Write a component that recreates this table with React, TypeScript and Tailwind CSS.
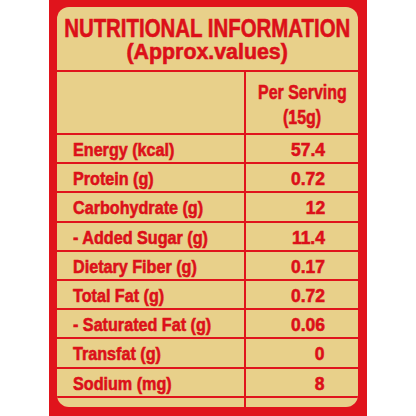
import React from 'react';

const rows: [string, string][] = [
  ['Energy (kcal)', '57.4'],
  ['Protein (g)', '0.72'],
  ['Carbohydrate (g)', '12'],
  ['- Added Sugar (g)', '11.4'],
  ['Dietary Fiber (g)', '0.17'],
  ['Total Fat (g)', '0.72'],
  ['- Saturated Fat (g)', '0.06'],
  ['Transfat (g)', '0'],
  ['Sodium (mg)', '8'],
];

export default function App() {
  return (
    <div className="w-[416px] h-[416px] bg-white overflow-hidden">
      <div
        className="ml-[49px] w-[318px] h-[416px] bg-[#e0141c] pt-[7px] pl-[8px] pr-[9px] text-[#dc1019] [-webkit-text-stroke:0.6px_#dc1019]"
        style={{ fontFamily: '"Liberation Sans", Arial, sans-serif' }}
      >
        <div className="h-[400px] rounded-[12px] bg-[#e8d08a] overflow-hidden">
          <div className="h-[65px] border-b-2 border-[#e0141c] flex flex-col items-center font-bold whitespace-nowrap">
            <div className="mt-[9px] text-[26px] leading-[24px] scale-x-[0.785] origin-center">NUTRITIONAL INFORMATION</div>
            <div className="mt-[1px] text-[22px] leading-[22px] scale-x-[0.97] origin-center">(Approx.values)</div>
          </div>
          <div className="flex h-[63px] border-b-2 border-[#e0141c]">
            <div className="w-[189px] shrink-0 border-r-2 border-[#e0141c]" />
            <div className="flex-1 min-w-0 flex flex-col items-center pt-[6.5px] text-[21px] font-bold leading-[25px] whitespace-nowrap">
              <div className="scale-x-[0.76] origin-center">Per Serving</div>
              <div className="scale-x-[0.76] origin-center">(15g)</div>
            </div>
          </div>
          {rows.map(([label, value]) => (
            <div key={label} className="flex h-[29.2px] border-b-2 border-[#e0141c] text-[19px] font-bold leading-[19px] whitespace-nowrap">
              <div className="w-[189px] shrink-0 border-r-2 border-[#e0141c] pl-[16px] pt-[5px]">
                <div className="scale-x-[0.85] origin-left">{label}</div>
              </div>
              <div className="flex-1 min-w-0 flex justify-end pr-[33px] pt-[5px]">
                <div className="scale-x-[0.92] origin-right">{value}</div>
              </div>
            </div>
          ))}
          <div className="flex h-[20px]">
            <div className="w-[189px] shrink-0 border-r-2 border-[#e0141c]" />
          </div>
        </div>
      </div>
    </div>
  );
}
